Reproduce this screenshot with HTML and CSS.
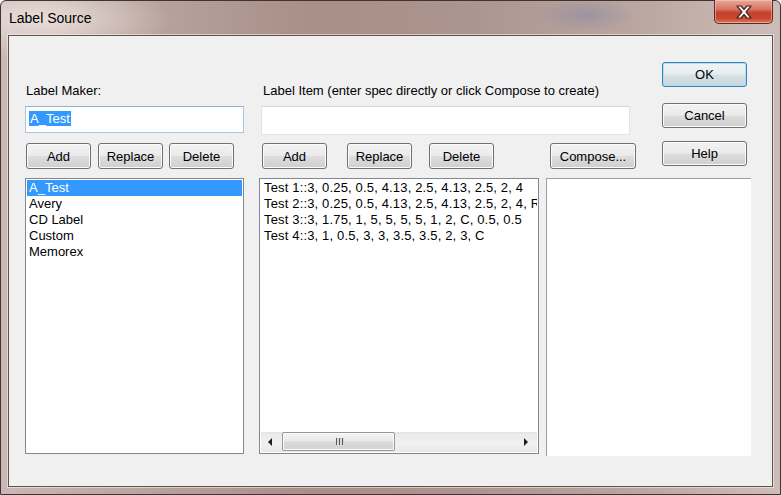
FILE: index.html
```html
<!DOCTYPE html>
<html lang="en">
<head>
    <meta charset="UTF-8">
    <title>Label Source</title>
    <link rel="stylesheet" href="styles.css">
</head>
<body>
    <div class="window">
        <div class="titlebar">
            <span class="title">Label Source</span>
            <button class="close-btn">
                <svg width="20" height="14" viewBox="0 0 20 14">
                    <path d="M3 1 L7 1 L10 4.5 L13 1 L17 1 L12 7 L17 13 L13 13 L10 9.5 L7 13 L3 13 L8 7 Z" fill="#ffffff" stroke="#4a2a26" stroke-width="1.2" stroke-linejoin="round"/>
                </svg>
            </button>
        </div>

        <div class="client">
            <div class="top">
                <div class="maker-col">
                    <div class="field-label">Label Maker:</div>
                    <div class="textbox focused"><span class="sel-text">A_Test</span></div>
                    <div class="btn-row maker-btns">
                        <button class="btn">Add</button>
                        <button class="btn">Replace</button>
                        <button class="btn">Delete</button>
                    </div>
                </div>

                <div class="item-col">
                    <div class="field-label">Label Item (enter spec directly or click Compose to create)</div>
                    <div class="textbox tall"></div>
                    <div class="btn-row item-btns">
                        <button class="btn">Add</button>
                        <button class="btn">Replace</button>
                        <button class="btn">Delete</button>
                        <button class="btn compose">Compose...</button>
                    </div>
                </div>

                <div class="dlg-btns">
                    <button class="btn wide default">OK</button>
                    <button class="btn wide">Cancel</button>
                    <button class="btn wide">Help</button>
                </div>
            </div>

            <div class="lists">
                <ul class="listbox maker-list">
                    <li class="selected">A_Test</li>
                    <li>Avery</li>
                    <li>CD Label</li>
                    <li>Custom</li>
                    <li>Memorex</li>
                </ul>

                <div class="listbox item-list">
                    <ul>
                        <li>Test 1::3, 0.25, 0.5, 4.13, 2.5, 4.13, 2.5, 2, 4</li>
                        <li>Test 2::3, 0.25, 0.5, 4.13, 2.5, 4.13, 2.5, 2, 4, R</li>
                        <li>Test 3::3, 1.75, 1, 5, 5, 5, 5, 1, 2, C, 0.5, 0.5</li>
                        <li>Test 4::3, 1, 0.5, 3, 3, 3.5, 3.5, 2, 3, C</li>
                    </ul>
                    <div class="hscroll">
                        <span class="arrow left"></span>
                        <div class="track">
                            <div class="thumb"><span class="grip"></span></div>
                        </div>
                        <span class="arrow right"></span>
                    </div>
                </div>

                <div class="preview"></div>
            </div>
        </div>
    </div>
</body>
</html>
```

FILE: styles.css
```css
html, body {
    margin: 0;
    padding: 0;
}
body {
    width: 781px;
    height: 495px;
    overflow: hidden;
    font-family: "Liberation Sans", Arial, sans-serif;
    font-size: 13px;
    color: #000;
    background: #ffffff;
}
.window {
    box-sizing: border-box;
    width: 781px;
    height: 495px;
    border: 1px solid #3b3634;
    border-radius: 6px 6px 0 0;
    padding: 0 7px 7px 7px;
    background:
        radial-gradient(ellipse 50px 16px at 585px 14px, rgba(120, 130, 170, 0.4), transparent),
        radial-gradient(ellipse 130px 40px at 40px 18px, rgba(240, 230, 226, 0.85), transparent),
        linear-gradient(to right, #c9b8b3 0%, #b8a29c 20%, #a88f88 40%, #ac958e 60%, #b9a49f 80%, #cdbdb8 100%);
    display: flex;
    flex-direction: column;
}
.titlebar {
    height: 34px;
    display: flex;
    align-items: flex-start;
    justify-content: space-between;
}
.title {
    font-size: 14px;
    margin: 9px 0 0 1px;
    color: #000;
}
.close-btn {
    width: 59px;
    height: 24px;
    margin: -1px 0 0 0;
    border: 1px solid #5b2b25;
    border-top: none;
    border-radius: 0 0 5px 5px;
    background: linear-gradient(#e8a898 0%, #d9745f 40%, #c2412a 55%, #c9482f 80%, #dc7a62 100%);
    box-shadow: inset 0 0 0 1px rgba(255, 210, 200, 0.5);
    display: flex;
    align-items: center;
    justify-content: center;
    padding: 0;
}
.client {
    flex: 1;
    background: #f0f0f0;
    border: 1px solid #5d5452;
    box-shadow: 0 0 0 1px rgba(255, 245, 242, 0.55);
}
.top {
    display: flex;
    align-items: flex-start;
}
.maker-col {
    width: 219px;
    margin-left: 16px;
    padding-top: 47px;
    flex-shrink: 0;
}
.item-col {
    width: 369px;
    margin-left: 17px;
    padding-top: 47px;
    flex-shrink: 0;
}
.field-label {
    line-height: 15px;
    padding-left: 1px;
    white-space: nowrap;
}
.item-col .field-label {
    padding-left: 2px;
}
.textbox {
    box-sizing: border-box;
    height: 27px;
    margin-top: 8px;
    background: #fff;
    border: 1px solid #dcdfe3;
    border-top-color: #c5cad0;
    padding: 4px 0 0 3px;
}
.textbox.focused {
    border-color: #a7c6e3;
    border-top-color: #8db2d6;
}
.textbox.tall {
    height: 29px;
    border-color: #e2e3e6;
    border-top-color: #d6d8dc;
}
.sel-text {
    background: #3399ff;
    color: #fff;
    line-height: 15px;
    display: inline-block;
    padding: 0 1px;
}
.btn-row {
    display: flex;
    margin-top: 10px;
}
.item-btns {
    margin-top: 8px;
}
.btn {
    box-sizing: border-box;
    flex-shrink: 0;
    width: 65px;
    height: 26px;
    padding: 0;
    font-family: inherit;
    font-size: 13px;
    color: #000;
    border: 1px solid #707070;
    border-radius: 3px;
    background: linear-gradient(#f2f2f2 0%, #ebebeb 48%, #dddddd 52%, #cfcfcf 100%);
    box-shadow: inset 0 0 0 1px #fbfbfb;
}
.maker-btns .btn:nth-child(1) { margin-left: 1px; }
.maker-btns .btn:nth-child(2) { margin-left: 7px; }
.maker-btns .btn:nth-child(3) { margin-left: 6px; }
.item-btns .btn:nth-child(1) { margin-left: 1px; }
.item-btns .btn:nth-child(2) { margin-left: 20px; }
.item-btns .btn:nth-child(3) { margin-left: 17px; }
.item-btns .compose {
    width: 86px;
    margin-left: 56px;
}
.dlg-btns {
    display: flex;
    flex-direction: column;
    margin-left: 32px;
    padding-top: 26px;
}
.btn.wide {
    width: 85px;
    height: 25px;
}
.dlg-btns .btn:nth-child(2) { margin-top: 16px; }
.dlg-btns .btn:nth-child(3) { margin-top: 13px; }
.btn.default {
    border-color: #3c7fb1;
    background: linear-gradient(#f0f4f6 0%, #e6ecef 48%, #d7e1e6 52%, #cbd7dd 100%);
    box-shadow: inset 0 0 0 1px #a9e3f8;
}
.lists {
    display: flex;
    align-items: flex-start;
    margin-top: 9px;
}
.listbox {
    box-sizing: border-box;
    height: 276px;
    margin: 0;
    padding: 1px;
    list-style: none;
    background: #fff;
    border: 1px solid #828790;
    flex-shrink: 0;
}
.listbox ul {
    list-style: none;
    margin: 0;
    padding: 0;
}
.listbox li {
    height: 16px;
    line-height: 16px;
    padding-left: 3px;
    white-space: nowrap;
}
.maker-list {
    width: 219px;
    margin-left: 16px;
}
.maker-list li {
    padding-left: 2px;
}
.maker-list li.selected {
    background: #3399ff;
    color: #fff;
}
.item-list {
    width: 280px;
    margin-left: 15px;
    display: flex;
    flex-direction: column;
    overflow: hidden;
}
.item-list ul {
    flex: 1;
    overflow: hidden;
}
.item-list li {
    letter-spacing: 0.16px;
}
.hscroll {
    height: 20px;
    display: flex;
    align-items: center;
    background: linear-gradient(#e3e3e3 0%, #ececec 15%, #f0f0f0 60%, #e8e8e8 100%);
}
.arrow {
    width: 0;
    height: 0;
    border-top: 4px solid transparent;
    border-bottom: 4px solid transparent;
}
.arrow.left {
    border-right: 4px solid #1e1e1e;
    margin: 0 10px 0 7px;
}
.arrow.right {
    border-left: 4px solid #1e1e1e;
    margin: 0 9px 0 4px;
}
.track {
    flex: 1;
    height: 20px;
    display: flex;
    align-items: center;
}
.thumb {
    box-sizing: border-box;
    width: 113px;
    height: 19px;
    margin-top: -1px;
    border: 1px solid #979797;
    border-radius: 2px;
    background: linear-gradient(to bottom, #f4f4f4 0%, #e9e9e9 45%, #dadada 55%, #d2d2d2 100%);
    box-shadow: inset 0 0 0 1px #fafafa;
    display: flex;
    align-items: center;
    justify-content: center;
}
.grip {
    width: 8px;
    height: 7px;
    margin-left: 2px;
    background: repeating-linear-gradient(to right, #5a5a5a 0, #5a5a5a 1px, #d8d8d8 1px, #d8d8d8 3px);
}
.preview {
    box-sizing: border-box;
    width: 205px;
    height: 278px;
    margin-left: 7px;
    background: #fff;
    border-top: 1px solid #a0a0a0;
    border-left: 1px solid #a0a0a0;
    flex-shrink: 0;
}
```
